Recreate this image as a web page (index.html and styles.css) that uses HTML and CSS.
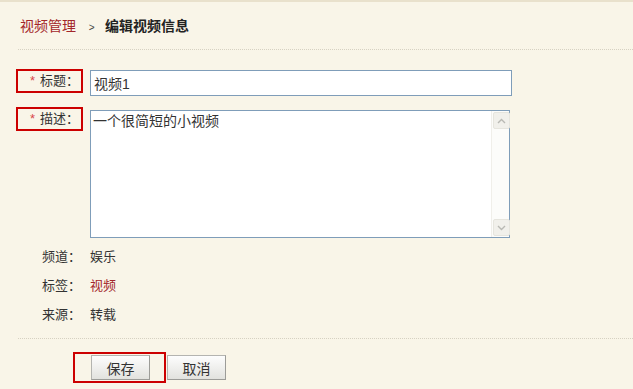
FILE: index.html
```html
<!DOCTYPE html>
<html lang="zh-CN">
<head>
  <meta charset="UTF-8">
  <meta name="viewport" content="width=device-width, initial-scale=1.0">
  <title>编辑视频信息</title>
  <link rel="stylesheet" href="styles.css">
</head>
<body>
  <div class="crumb">
    <a class="crumb-link" href="#">视频管理</a>
    <span class="crumb-sep">&gt;</span>
    <strong class="crumb-cur">编辑视频信息</strong>
  </div>

  <form class="edit-form">
    <div class="field">
      <label class="field-label"><span class="req">*</span>标题：</label>
      <input class="text-input" type="text" value="视频1">
    </div>

    <div class="field field-desc">
      <label class="field-label"><span class="req">*</span>描述：</label>
      <div class="textarea-box">
        <textarea class="desc">一个很简短的小视频</textarea>
        <div class="fake-scroll">
          <span class="sb-btn">
            <svg width="9" height="6" viewBox="0 0 9 6"><path d="M1 5 L4.5 1.5 L8 5" fill="none" stroke="#b9b9b4" stroke-width="1.4"/></svg>
          </span>
          <span class="sb-track"></span>
          <span class="sb-btn">
            <svg width="9" height="6" viewBox="0 0 9 6"><path d="M1 1 L4.5 4.5 L8 1" fill="none" stroke="#b9b9b4" stroke-width="1.4"/></svg>
          </span>
        </div>
      </div>
    </div>

    <div class="info">
      <div class="info-row"><span class="info-label">频道：</span><span>娱乐</span></div>
      <div class="info-row"><span class="info-label">标签：</span><a class="tag" href="#">视频</a></div>
      <div class="info-row"><span class="info-label">来源：</span><span>转载</span></div>
    </div>

    <div class="actions">
      <span class="save-box"><button class="btn" type="button">保存</button></span>
      <button class="btn btn-cancel" type="button">取消</button>
    </div>
  </form>
</body>
</html>
```

FILE: styles.css
```css
body {
  margin: 0;
  background-color: #f9f5e8;
  border-top: 2px solid #e9e1cc;
  font-family: "Liberation Sans", "Noto Sans CJK SC", sans-serif;
  font-size: 13px;
  color: #333;
}

/* breadcrumb */
.crumb {
  margin-left: 18px;
  padding: 12px 0 9px 2px;
  line-height: 24px;
  border-bottom: 1px dotted #d6d1c2;
}

.crumb-link {
  color: #a3262a;
  text-decoration: none;
  font-size: 14px;
}

.crumb-sep {
  font-size: 10px;
  color: #444;
  margin: 0 7px 0 9px;
}

.crumb-cur {
  font-size: 14px;
  color: #222;
}

/* form */
.edit-form {
  padding-left: 16px;
}

.field {
  display: flex;
  align-items: flex-start;
  margin-top: 19px;
}

.field-desc {
  margin-top: 11px;
}

.field-label {
  box-sizing: border-box;
  width: 67px;
  height: 24px;
  margin-right: 7px;
  padding-right: 2px;
  border: 2px solid #cc0000;
  text-align: right;
  line-height: 20px;
  white-space: nowrap;
}

.req {
  color: #d8464a;
  margin-right: 5px;
}

.text-input {
  box-sizing: border-box;
  width: 422px;
  height: 26px;
  margin: 1px 0 0;
  padding: 0 3px;
  border: 1px solid #7f9db9;
  background: #fff;
  font-family: "Liberation Sans", "Noto Sans CJK SC", sans-serif;
  font-size: 14px;
  color: #333;
}

.textarea-box {
  box-sizing: border-box;
  display: flex;
  width: 420px;
  height: 128px;
  margin-top: 3px;
  border: 1px solid #7f9db9;
  background: #fff;
}

.desc {
  flex: 1;
  border: none;
  resize: none;
  outline: none;
  padding: 1px 2px;
  font-family: "Liberation Sans", "Noto Sans CJK SC", sans-serif;
  font-size: 14px;
  line-height: 18px;
  color: #333;
  background: transparent;
}

.fake-scroll {
  display: flex;
  flex-direction: column;
  width: 17px;
  padding: 1px 0;
  border-left: 1px solid #f0efea;
  background: #fcfcfa;
}

.sb-btn {
  display: flex;
  align-items: center;
  justify-content: center;
  width: 15px;
  height: 15px;
  margin-left: 1px;
  border: 1px solid #e6e5de;
  border-radius: 2px;
  background: #f1f0eb;
}

.sb-track {
  flex: 1;
}

/* read only info */
.info {
  margin-left: 2px;
  padding: 4px 0 9px 24px;
  border-bottom: 1px dotted #d6d1c2;
}

.info-row {
  line-height: 29px;
}

.info-label {
  display: inline-block;
  width: 48px;
}

.tag {
  color: #a3262a;
  text-decoration: none;
}

/* buttons */
.actions {
  display: flex;
  align-items: center;
  margin: 13px 0 0 57px;
}

.save-box {
  display: block;
  padding: 1px 14px 1px 16px;
  border: 2px solid #cc0000;
}

.btn {
  display: block;
  box-sizing: border-box;
  width: 59px;
  height: 25px;
  border: 1px solid #b4b4b0;
  border-right-color: #9c9c98;
  border-bottom-color: #9c9c98;
  background: linear-gradient(#fdfdfd, #e2e2de);
  font-family: "Liberation Sans", "Noto Sans CJK SC", sans-serif;
  font-size: 14px;
  color: #333;
  cursor: pointer;
}

.btn-cancel {
  margin-left: 1px;
}
```
